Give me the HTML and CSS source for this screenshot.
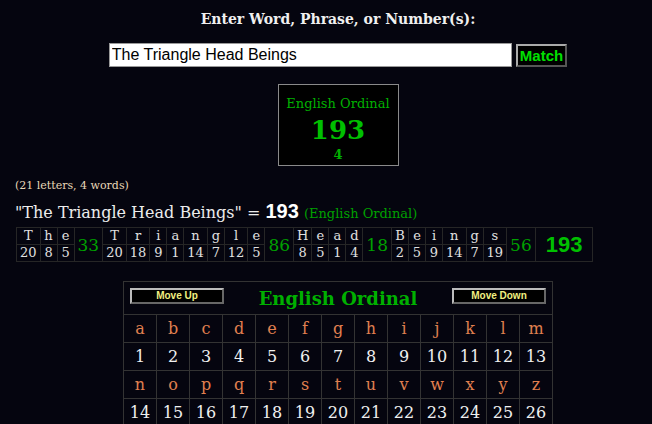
FILE: index.html
```html
<!DOCTYPE html>
<html lang="en">
<head>
    <meta charset="UTF-8">
    <title>Gematria Calculator</title>
    <link rel="stylesheet" href="styles.css">
</head>
<body>

<div class="centered">
    <h1 class="prompt">Enter Word, Phrase, or Number(s):</h1>
    <div class="entry">
        <input type="text" class="entry-text" value="The Triangle Head Beings">
        <button class="match-button">Match</button>
    </div>
    <div class="summary">
        <div class="summary-name">English Ordinal</div>
        <div class="summary-total">193</div>
        <div class="summary-words">4</div>
    </div>
</div>

<p class="counts">(21 letters, 4 words)</p>
<p class="phrase">"The Triangle Head Beings" = <b>193</b> <span class="phrase-cipher">(English Ordinal)</span></p>

<table class="breakdown">
    <tr id="breakdown-letters"></tr>
    <tr id="breakdown-values"></tr>
</table>

<div class="centered">
    <table class="chart" id="chart">
        <tr class="chart-head">
            <td colspan="13">
                <div class="chart-head-row">
                    <button class="move-button">Move Up</button>
                    <span class="chart-title">English Ordinal</span>
                    <button class="move-button">Move Down</button>
                </div>
            </td>
        </tr>
    </table>
</div>

<script>
    const phrase = "The Triangle Head Beings";
    const letterValue = c => c.toLowerCase().charCodeAt(0) - 96;

    // breakdown table: letters on top, values below, word sums spanning both rows
    const letterRow = document.getElementById("breakdown-letters");
    const valueRow = document.getElementById("breakdown-values");
    let total = 0;
    phrase.split(" ").forEach(word => {
        let sum = 0;
        for (const c of word) {
            letterRow.insertAdjacentHTML("beforeend", `<td>${c}</td>`);
            valueRow.insertAdjacentHTML("beforeend", `<td>${letterValue(c)}</td>`);
            sum += letterValue(c);
        }
        total += sum;
        letterRow.insertAdjacentHTML("beforeend", `<td rowspan="2" class="word-sum">${sum}</td>`);
    });
    letterRow.insertAdjacentHTML("beforeend", `<td rowspan="2" class="grand-total">${total}</td>`);

    // cipher chart
    const chart = document.getElementById("chart");
    for (let half = 0; half < 2; half++) {
        let letters = "", numbers = "";
        for (let i = 1; i <= 13; i++) {
            const n = half * 13 + i;
            letters += `<td class="chart-letter">${String.fromCharCode(96 + n)}</td>`;
            numbers += `<td class="chart-number">${n}</td>`;
        }
        chart.insertAdjacentHTML("beforeend", `<tr>${letters}</tr><tr>${numbers}</tr>`);
    }
</script>

</body>
</html>
```

FILE: styles.css
```css
/* Page de base */
body {
    background-color: #05050f;
    color: #e8e8e8;
    font-family: "DejaVu Serif", serif;
    margin: 0;
}

.centered {
    padding-left: 24px;
    display: flex;
    flex-direction: column;
    align-items: center;
}

.prompt {
    font-size: 14px;
    font-weight: bold;
    color: #f0f0f0;
    margin: 11px 0 16px 0;
}

.entry {
    display: flex;
    align-items: center;
    gap: 4px;
}

.entry-text {
    width: 397px;
    height: 20px;
    padding: 1px 2px;
    border: 1px solid #999;
    font-family: "Liberation Sans", Arial, sans-serif;
    font-size: 16px;
    color: #000;
}

.match-button {
    background-color: #000;
    color: #00e000;
    font-family: "Liberation Sans", Arial, sans-serif;
    font-weight: bold;
    font-size: 15px;
    height: 23px;
    padding: 0 2px;
    border: 2px outset #aaa;
}

.summary {
    margin-top: 17px;
    width: 119px;
    height: 80px;
    border: 1px solid #8a8a8a;
    background-color: #000;
    color: #00b000;
    text-align: center;
}

.summary-name {
    font-size: 13px;
    margin-top: 11px;
}

.summary-total {
    font-size: 26px;
    font-weight: bold;
    line-height: 38px;
    color: #00c000;
}

.summary-words {
    font-size: 13px;
    font-weight: bold;
    line-height: 12px;
}

.counts {
    font-size: 11px;
    color: #e8d8b8;
    margin: 13px 0 0 15px;
}

.phrase {
    font-size: 16px;
    color: #ececec;
    margin: 8px 0 0 15px;
}

.phrase b {
    font-family: "Liberation Sans", Arial, sans-serif;
    font-size: 20px;
    color: #fff;
}

.phrase-cipher {
    font-size: 13px;
    color: #00a000;
}

/* Tableau des lettres */
.breakdown {
    border-collapse: collapse;
    margin: 4px 0 0 16px;
}

.breakdown td {
    border: 1px solid #262626;
    font-size: 13px;
    color: #e0e0e0;
    text-align: center;
    min-width: 10px;
    padding: 0 3px;
    line-height: 16px;
}

.breakdown .word-sum {
    color: #00a000;
    font-size: 17px;
    padding: 0 3px;
}

.breakdown .grand-total {
    color: #00c000;
    font-family: "Liberation Sans", Arial, sans-serif;
    font-weight: bold;
    font-size: 22px;
    padding: 0 10px;
}

/* Tableau du chiffre */
.chart {
    border-collapse: collapse;
    margin-top: 19px;
    width: 430px;
}

.chart td {
    border: 1px solid #333;
    text-align: center;
    width: 33px;
    height: 27px;
    padding: 0;
    font-size: 16px;
}

.chart-head td {
    height: 32px;
}

.chart-head-row {
    display: flex;
    justify-content: space-between;
    align-items: center;
    padding: 0 6px 5px 6px;
}

.move-button {
    width: 94px;
    height: 16px;
    padding: 0;
    background-color: #000;
    color: #f0f080;
    font-family: "Liberation Sans", Arial, sans-serif;
    font-weight: bold;
    font-size: 10px;
    border: 2px outset #bbb;
}

.chart-title {
    font-size: 18px;
    font-weight: bold;
    color: #00b000;
    padding-top: 6px;
}

.chart-letter {
    color: #e08050;
}

.chart-number {
    color: #f0f0f0;
}
```
